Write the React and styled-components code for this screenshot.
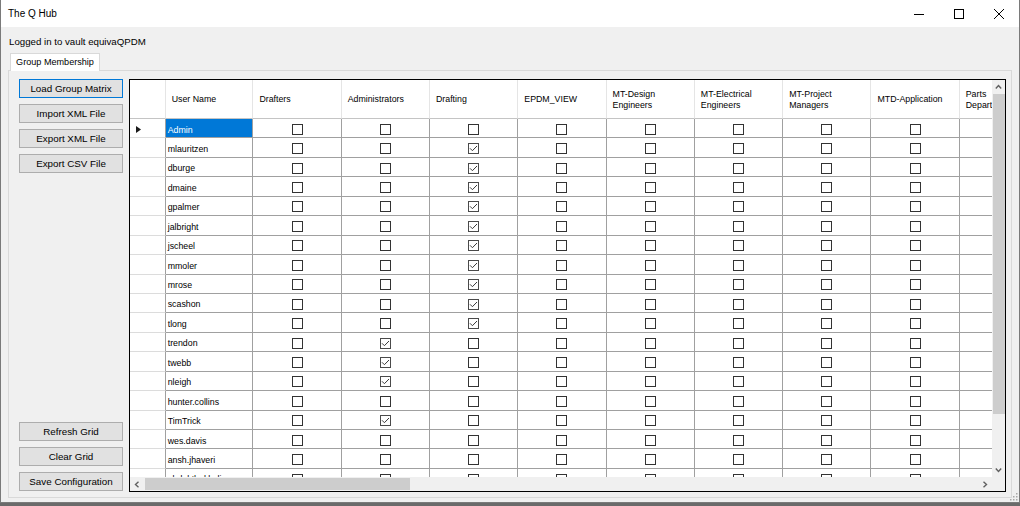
import React from 'react';
import styled, { createGlobalStyle } from 'styled-components';

const GlobalStyle = createGlobalStyle`
  html, body { margin: 0; padding: 0; }
  body {
    width: 1020px;
    height: 506px;
    overflow: hidden;
    background: #ffffff;
    font-family: "Liberation Sans", Arial, sans-serif;
    color: #000;
  }
  * { box-sizing: border-box; }
`;

const Desktop = styled.div`
  width: 1020px;
  height: 506px;
  background: linear-gradient(to bottom, #ffffff 0, #ffffff 503px, #6a6a6a 503px);
`;

const Window = styled.div`
  position: relative;
  width: 1020px;
  height: 503px;
  border-left: 1px solid #7a7a7a;
  border-right: 1px solid #7a7a7a;
  border-bottom: 1px solid #7a7a7a;
  background: #f0f0f0;
  display: flex;
  flex-direction: column;
`;

const TitleBar = styled.div`
  height: 27px;
  flex-shrink: 0;
  background: #ffffff;
  display: flex;
  align-items: center;
  padding-left: 7px;
`;

const Title = styled.div`
  flex: 1;
  font-size: 10px;
  line-height: 14px;
`;

const Controls = styled.div`
  display: flex;
  height: 27px;
`;

const ControlButton = styled.div`
  width: 40px;
  height: 27px;
  display: flex;
  align-items: center;
  justify-content: center;
`;

const Body = styled.div`
  flex: 1;
  display: flex;
  flex-direction: column;
  padding-left: 7px;
`;

const StatusLabel = styled.div`
  margin-top: 8px;
  height: 14px;
  line-height: 14px;
  font-size: 9.7px;
  padding-left: 1px;
`;

const TabStrip = styled.div`
  margin-top: 4px;
  height: 17px;
  display: flex;
  padding-left: 2px;
`;

const Tab = styled.div`
  position: relative;
  z-index: 1;
  width: 90px;
  height: 18px;
  margin-bottom: -1px;
  border: 1px solid #d9d9d9;
  border-bottom: none;
  background: #ffffff;
  font-size: 9.1px;
  line-height: 16px;
  text-align: center;
`;

const Panel = styled.div`
  width: 1004px;
  height: 428px;
  border: 1px solid #d9d9d9;
  background: #f0f0f0;
  display: flex;
  gap: 6px;
  padding: 8px 5px 5px 10px;
`;

const ButtonColumn = styled.div`
  width: 104px;
  flex-shrink: 0;
  display: flex;
  flex-direction: column;
  justify-content: space-between;
  padding-bottom: 1px;
`;

const ButtonGroup = styled.div`
  display: flex;
  flex-direction: column;
  gap: 6px;
`;

const Button = styled.button`
  height: 19px;
  width: 104px;
  padding: 0;
  margin: 0;
  border: 1px solid ${p => (p.$focused ? '#0078d7' : '#adadad')};
  background: #e1e1e1;
  font-family: "Liberation Sans", Arial, sans-serif;
  font-size: 9.8px;
  color: #000;
  line-height: 17px;
  text-align: center;
`;

const Grid = styled.div`
  flex: 1;
  height: 413px;
  border: 1px solid #000;
  background: #ffffff;
  display: grid;
  grid-template-columns: 1fr 13px;
  grid-template-rows: 1fr 14px;
  overflow: hidden;
`;

const Viewport = styled.div`
  overflow: hidden;
  background: #ffffff;
`;

const HeaderRow = styled.div`
  display: flex;
  height: 39px;
`;

const HeaderCell = styled.div`
  flex-shrink: 0;
  width: ${p => p.$w}px;
  height: 39px;
  border-right: 1px solid #e5e5e5;
  border-bottom: 1px solid #c4c4c4;
  padding-left: 6px;
  padding-top: 1px;
  display: flex;
  flex-direction: column;
  justify-content: center;
  font-size: 8.8px;
  line-height: 11px;
  white-space: nowrap;
  overflow: hidden;
`;

const Row = styled.div`
  display: flex;
  height: 19.45px;
`;

const RowHeader = styled.div`
  flex-shrink: 0;
  width: 35.7px;
  height: 100%;
  border-right: 1px solid #a0a0a0;
  border-bottom: 1px solid #dcdcdc;
  display: flex;
  align-items: center;
  padding-left: 6px;
  padding-top: 2px;
`;

const NameCell = styled.div`
  flex-shrink: 0;
  width: 87.7px;
  height: 100%;
  border-right: 1px solid #a0a0a0;
  border-bottom: 1px solid #a0a0a0;
  background: ${p => (p.$selected ? '#0078d7' : '#ffffff')};
  color: ${p => (p.$selected ? '#ffffff' : '#000000')};
  font-size: 8.8px;
  line-height: 18px;
  padding-left: 2px;
  padding-top: 1.5px;
  white-space: nowrap;
  overflow: hidden;
`;

const CheckCell = styled.div`
  flex-shrink: 0;
  width: 88.3px;
  height: 100%;
  border-right: 1px solid #a0a0a0;
  border-bottom: 1px solid #a0a0a0;
  display: flex;
  align-items: center;
  justify-content: center;
  padding-top: 2px;
`;

const Box = styled.div`
  width: 11px;
  height: 11px;
  border: 1px solid ${p => (p.$checked ? '#4a4a4a' : '#333333')};
  background: #ffffff;
  display: flex;
  align-items: center;
  justify-content: center;
`;

const VScroll = styled.div`
  background: #f0f0f0;
  display: flex;
  flex-direction: column;
`;

const HScroll = styled.div`
  background: #f0f0f0;
  display: flex;
`;

const Corner = styled.div`
  background: #f0f0f0;
`;

const VArrow = styled.div`
  height: 14px;
  flex-shrink: 0;
  display: flex;
  align-items: center;
  justify-content: center;
`;

const HArrow = styled.div`
  width: 14px;
  flex-shrink: 0;
  display: flex;
  align-items: center;
  justify-content: center;
`;

const VThumb = styled.div`
  height: 320px;
  flex-shrink: 0;
  margin: 0 0 0 1px;
  background: #cdcdcd;
`;

const HThumb = styled.div`
  width: 265px;
  flex-shrink: 0;
  margin: 1px 0 1px 1px;
  background: #cdcdcd;
`;

const Spacer = styled.div`
  flex: 1;
`;

const Grip = styled.svg`
  position: absolute;
  right: 1px;
  bottom: 1px;
`;

const groups = [
  ['Drafters'],
  ['Administrators'],
  ['Drafting'],
  ['EPDM_VIEW'],
  ['MT-Design', 'Engineers'],
  ['MT-Electrical', 'Engineers'],
  ['MT-Project', 'Managers'],
  ['MTD-Application'],
  ['Parts', 'Department'],
];

const users = [
  'Admin', 'mlauritzen', 'dburge', 'dmaine', 'gpalmer', 'jalbright', 'jscheel',
  'mmoler', 'mrose', 'scashon', 'tlong', 'trendon', 'twebb', 'nleigh',
  'hunter.collins', 'TimTrick', 'wes.davis', 'ansh.jhaveri', 'abdul.thakkali',
];

const isChecked = (row, col) => {
  if (col === 2 && row >= 1 && row <= 10) return true;
  if (col === 1 && [11, 12, 13, 15].includes(row)) return true;
  return false;
};

const Chevron = ({ dir }) => {
  const paths = {
    up: 'M0.8 4.5 L3.5 1.5 L6.2 4.5',
    down: 'M0.8 1.5 L3.5 4.5 L6.2 1.5',
    left: 'M4.5 0.8 L1.5 3.5 L4.5 6.2',
    right: 'M1.5 0.8 L4.5 3.5 L1.5 6.2',
  };
  const w = dir === 'up' || dir === 'down' ? 7 : 6;
  const h = dir === 'up' || dir === 'down' ? 6 : 7;
  return (
    <svg width={w} height={h} viewBox={`0 0 ${w} ${h}`}>
      <path d={paths[dir]} fill="none" stroke="#606060" strokeWidth="1.4" />
    </svg>
  );
};

const CheckBox = ({ checked }) => (
  <Box $checked={checked}>
    {checked && (
      <svg width="9" height="9" viewBox="0 0 9 9">
        <path d="M1 4.3 L3.4 6.7 L8 2" fill="none" stroke="#3a3a3a" strokeWidth="1" />
      </svg>
    )}
  </Box>
);

export default function App() {
  return (
    <>
      <GlobalStyle />
      <Desktop>
        <Window>
          <TitleBar>
            <Title>The Q Hub</Title>
            <Controls>
              <ControlButton>
                <svg width="10" height="10" viewBox="0 0 10 10">
                  <path d="M0 5.5 H10" stroke="#000" strokeWidth="1" />
                </svg>
              </ControlButton>
              <ControlButton>
                <svg width="10" height="10" viewBox="0 0 10 10">
                  <rect x="0.5" y="0.5" width="9" height="9" fill="none" stroke="#000" strokeWidth="1" />
                </svg>
              </ControlButton>
              <ControlButton>
                <svg width="10" height="10" viewBox="0 0 10 10">
                  <path d="M0 0 L10 10 M10 0 L0 10" stroke="#000" strokeWidth="1" />
                </svg>
              </ControlButton>
            </Controls>
          </TitleBar>
          <Body>
            <StatusLabel>Logged in to vault equivaQPDM</StatusLabel>
            <TabStrip>
              <Tab>Group Membership</Tab>
            </TabStrip>
            <Panel>
              <ButtonColumn>
                <ButtonGroup>
                  <Button $focused>Load Group Matrix</Button>
                  <Button>Import XML File</Button>
                  <Button>Export XML File</Button>
                  <Button>Export CSV File</Button>
                </ButtonGroup>
                <ButtonGroup>
                  <Button>Refresh Grid</Button>
                  <Button>Clear Grid</Button>
                  <Button>Save Configuration</Button>
                </ButtonGroup>
              </ButtonColumn>
              <Grid>
                <Viewport>
                  <HeaderRow>
                    <HeaderCell $w={35.7} />
                    <HeaderCell $w={87.7}>User Name</HeaderCell>
                    {groups.map((g, i) => (
                      <HeaderCell key={i} $w={88.3}>
                        {g.map((line, j) => (
                          <span key={j}>{line}</span>
                        ))}
                      </HeaderCell>
                    ))}
                  </HeaderRow>
                  {users.map((u, r) => (
                    <Row key={u}>
                      <RowHeader>
                        {r === 0 && (
                          <svg width="5" height="7" viewBox="0 0 5 7">
                            <path d="M0 0 L5 3.5 L0 7 Z" fill="#1a1a1a" />
                          </svg>
                        )}
                      </RowHeader>
                      <NameCell $selected={r === 0}>{u}</NameCell>
                      {groups.map((g, c) => (
                        <CheckCell key={c}>
                          {c < 8 && <CheckBox checked={isChecked(r, c)} />}
                        </CheckCell>
                      ))}
                    </Row>
                  ))}
                </Viewport>
                <VScroll>
                  <VArrow><Chevron dir="up" /></VArrow>
                  <VThumb />
                  <Spacer />
                  <VArrow><Chevron dir="down" /></VArrow>
                </VScroll>
                <HScroll>
                  <HArrow><Chevron dir="left" /></HArrow>
                  <HThumb />
                  <Spacer />
                  <HArrow><Chevron dir="right" /></HArrow>
                </HScroll>
                <Corner />
              </Grid>
            </Panel>
          </Body>
          <Grip width="8" height="8" viewBox="0 0 8 8">
            <rect x="6" y="0" width="1.5" height="1.5" fill="#a8a8a8" />
            <rect x="3" y="3" width="1.5" height="1.5" fill="#a8a8a8" />
            <rect x="6" y="3" width="1.5" height="1.5" fill="#a8a8a8" />
            <rect x="0" y="6" width="1.5" height="1.5" fill="#a8a8a8" />
            <rect x="3" y="6" width="1.5" height="1.5" fill="#a8a8a8" />
            <rect x="6" y="6" width="1.5" height="1.5" fill="#a8a8a8" />
          </Grip>
        </Window>
      </Desktop>
    </>
  );
}
